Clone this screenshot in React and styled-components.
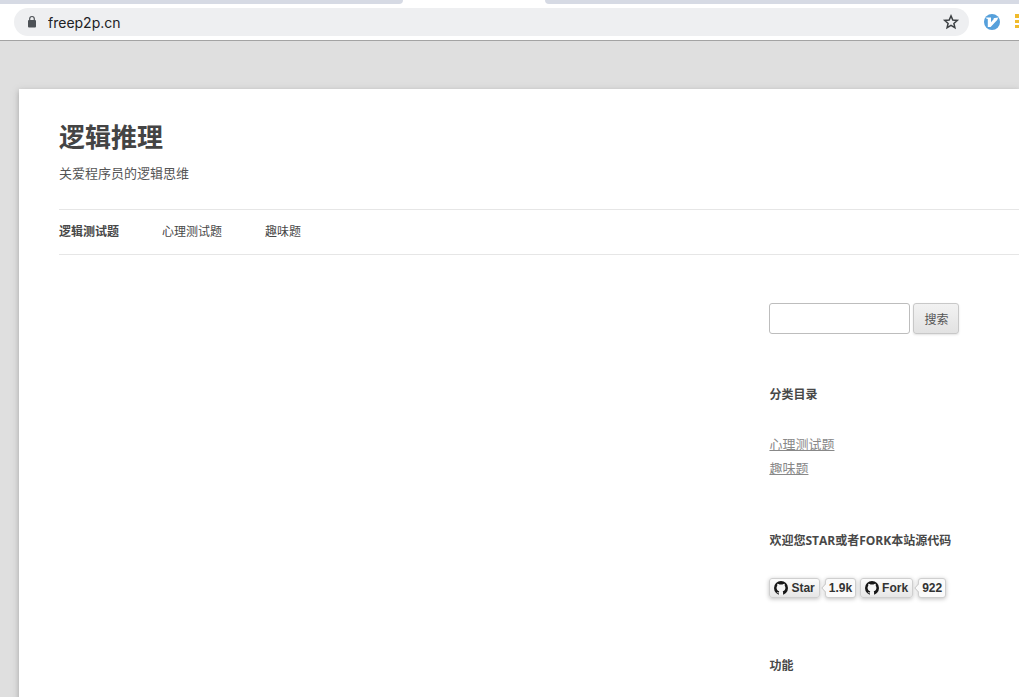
import React, { useState } from "react";
import styled, { createGlobalStyle } from "styled-components";

const menu = [
  { label: "逻辑测试题", href: "#logic", current: true },
  { label: "心理测试题", href: "#psychology" },
  { label: "趣味题", href: "#fun" },
];

const categories = [
  { label: "心理测试题", href: "#psychology" },
  { label: "趣味题", href: "#fun" },
];

const githubButtons = [
  { label: "Star", count: "1.9k" },
  { label: "Fork", count: "922" },
];

function LockIcon() {
  return (
    <svg width="14" height="14" viewBox="0 0 14 14">
      <rect x="3" y="5" width="8" height="7.5" rx="1" fill="#4d5156" />
      <path d="M4.7 5.4V3.8a2.3 2.3 0 0 1 4.6 0v1.6" fill="none" stroke="#4d5156" strokeWidth="1.2" />
    </svg>
  );
}

function GithubMark() {
  return (
    <svg width="14" height="14" viewBox="0 0 14 14">
      <circle cx="7" cy="7" r="7" fill="#161616" />
      <path
        d="M3.4 2.8C4.2 2.7 5 3.2 5.5 3.6 6.5 3.3 7.5 3.3 8.5 3.6 9 3.2 9.8 2.7 10.6 2.8 10.9 3.5 10.9 4.2 10.7 4.7 11.4 5.5 11.6 6.6 11.3 7.8 11 9.2 9.9 10 8.7 10.2 9 10.5 9.1 10.9 9.1 11.4V14H4.9V12.3C3.6 12.5 3.1 11.8 2.7 11.1 3.6 11.2 3.9 11.7 4.9 11.4 4.9 10.9 5 10.5 5.3 10.2 4.1 10 3 9.2 2.7 7.8 2.4 6.6 2.6 5.5 3.3 4.7 3.1 4.2 3.1 3.5 3.4 2.8Z"
        fill="#f4f4f4"
      />
    </svg>
  );
}

function BrowserBar() {
  return (
    <>
      <TabStrip>
        <LeftTabs />
        <RightTabs />
      </TabStrip>
      <Toolbar>
        <AddressBar>
          <LockIcon />
          <AddressInput type="text" aria-label="地址" defaultValue="freep2p.cn" />
          <IconButton type="button" aria-label="收藏">
            <svg width="18" height="18" viewBox="0 0 18 18">
              <path
                d="M9 2.9 10.8 7 15.3 7.4 11.9 10.4 12.9 14.7 9 12.4 5.1 14.7 6.1 10.4 2.7 7.4 7.2 7Z"
                fill="none"
                stroke="#3c4043"
                strokeWidth="1.5"
              />
            </svg>
          </IconButton>
        </AddressBar>
        <IconButton type="button" aria-label="Vimium">
          <svg width="16" height="16" viewBox="0 0 16 16">
            <circle cx="8" cy="8" r="8" fill="#56a0db" />
            <path d="M2.2 3.6H7V8.3L10 4.8 9.2 4.2 14.2 3.4 13.2 6 6.6 13H3.8V5L2.2 4.6Z" fill="#fff" />
          </svg>
        </IconButton>
        <IconButton type="button" aria-label="扩展程序">
          <svg width="16" height="16" viewBox="0 0 16 16">
            <path d="M0 0h16v4H0zM0 6h16v3H0zM0 11h16v3H0z" fill="#f0bb2c" />
          </svg>
        </IconButton>
      </Toolbar>
    </>
  );
}

function GithubButton({ label, count }) {
  return (
    <GithubGroup>
      <GithubLink href="#github">
        <GithubMark />
        {label}
      </GithubLink>
      <CountArrow width="5" height="10" viewBox="0 0 5 10">
        <path d="M5 0.5 0.8 5 5 9.5" fill="#fafafa" stroke="#c4c4c4" />
      </CountArrow>
      <GithubCount href="#github">{count}</GithubCount>
    </GithubGroup>
  );
}

function Sidebar() {
  const [query, setQuery] = useState("");

  return (
    <Aside>
      <Widget>
        <SearchForm onSubmit={(e) => e.preventDefault()}>
          <SearchInput
            type="text"
            aria-label="搜索"
            value={query}
            onChange={(e) => setQuery(e.target.value)}
          />
          <SearchButton type="submit">搜索</SearchButton>
        </SearchForm>
      </Widget>
      <Widget>
        <WidgetTitle>分类目录</WidgetTitle>
        <CategoryList>
          {categories.map((item) => (
            <li key={item.label}>
              <a href={item.href}>{item.label}</a>
            </li>
          ))}
        </CategoryList>
      </Widget>
      <Widget>
        <WidgetTitle>欢迎您STAR或者FORK本站源代码</WidgetTitle>
        <GithubRow>
          {githubButtons.map((item) => (
            <GithubButton key={item.label} {...item} />
          ))}
        </GithubRow>
      </Widget>
      <WidgetTitle>功能</WidgetTitle>
    </Aside>
  );
}

function App() {
  return (
    <Screen>
      <GlobalStyle />
      <BrowserBar />
      <Page>
        <SiteTitle>逻辑推理</SiteTitle>
        <SiteDescription>关爱程序员的逻辑思维</SiteDescription>
        <Nav>
          {menu.map((item) => (
            <NavLink key={item.label} href={item.href} $current={item.current}>
              {item.label}
            </NavLink>
          ))}
        </Nav>
        <Main>
          <Sidebar />
        </Main>
      </Page>
    </Screen>
  );
}

export default App;

const GlobalStyle = createGlobalStyle`
  * {
    box-sizing: border-box;
    margin: 0;
    padding: 0;
  }
  body {
    background: #dfdfdf;
    color: #444;
    font-family: "Open Sans", "Noto Sans CJK SC", sans-serif;
    font-size: 13px;
    line-height: 24px;
  }
  input, button {
    font-family: inherit;
  }
`;

const Screen = styled.div`
  display: flex;
  flex-direction: column;
  min-height: 100vh;
  overflow: hidden;
`;

const TabStrip = styled.div`
  display: flex;
  gap: 142px;
  height: 4px;
  background: #fff;
`;

const LeftTabs = styled.div`
  width: 403px;
  background: #d6dae4;
  border-bottom-right-radius: 8px;
`;

const RightTabs = styled.div`
  flex: 1;
  background: #d6dae4;
  border-bottom-left-radius: 8px;
`;

const Toolbar = styled.div`
  display: flex;
  align-items: center;
  gap: 15px;
  padding: 4px 0 4px 14px;
  margin-right: -12px;
  background: #fff;
  border-bottom: 1px solid #a3a3a3;
`;

const AddressBar = styled.div`
  flex: 1;
  display: flex;
  align-items: center;
  gap: 9px;
  height: 28px;
  padding: 0 9px 0 11px;
  border-radius: 14px;
  background: #eeeff1;
`;

const AddressInput = styled.input`
  flex: 1;
  min-width: 0;
  border: 0;
  outline: 0;
  background: transparent;
  color: #202124;
  font-family: Inter, Roboto, sans-serif;
  font-size: 14px;
`;

const IconButton = styled.button`
  display: flex;
  border: 0;
  background: transparent;
  cursor: pointer;
`;

const Page = styled.div`
  flex: 1;
  margin: 48px 0 0 19px;
  padding: 24px 0 0 40px;
  background: #fff;
  box-shadow: 0 2px 6px rgba(100, 100, 100, 0.5);
`;

const SiteTitle = styled.h1`
  font-size: 26px;
  line-height: 48px;
`;

const SiteDescription = styled.h2`
  color: #555;
  font-size: 13px;
  font-weight: normal;
`;

const Nav = styled.nav`
  display: flex;
  gap: 43px;
  margin-top: 24px;
  border-top: 1px solid #e6e6e6;
  border-bottom: 1px solid #e6e6e6;
`;

const NavLink = styled.a`
  color: #484848;
  font-size: 12px;
  font-weight: ${(props) => (props.$current ? "bold" : "normal")};
  line-height: 44px;
  text-decoration: none;
`;

const Main = styled.main`
  display: flex;
  justify-content: flex-end;
  padding-top: 48px;
`;

const Aside = styled.aside`
  width: 26%;
`;

const Widget = styled.section`
  margin-bottom: 49px;
`;

const WidgetTitle = styled.h3`
  margin-bottom: 25px;
  color: #484848;
  font-size: 12px;
  font-weight: bold;
`;

const SearchForm = styled.form`
  display: flex;
  gap: 3px;
  height: 31px;
`;

const SearchInput = styled.input`
  width: 141px;
  padding: 6px;
  border: 1px solid #bdbdbd;
  border-radius: 3px;
`;

const SearchButton = styled.button`
  padding: 0 10px;
  border: 1px solid #c8c8c8;
  border-radius: 3px;
  background: linear-gradient(#f2f2f2, #e2e2e2);
  box-shadow: 0 1px 2px rgba(64, 64, 64, 0.15);
  color: #555;
  font-size: 12px;
  cursor: pointer;
`;

const CategoryList = styled.ul`
  list-style: none;
  a {
    color: #888;
  }
`;

const GithubRow = styled.div`
  display: flex;
  gap: 4px;
  height: 27px;
`;

const GithubGroup = styled.div`
  display: flex;
  align-items: center;
  height: 20px;
`;

const GithubLink = styled.a`
  display: flex;
  align-items: center;
  gap: 3px;
  height: 20px;
  padding: 0 4px;
  border: 1px solid #cfcfcf;
  border-radius: 3px;
  background: linear-gradient(#fcfcfc, #e6e6e6);
  box-shadow: 0 1px 4px rgba(0, 0, 0, 0.25);
  color: #333;
  font-family: "Liberation Sans", sans-serif;
  font-size: 12px;
  font-weight: bold;
  text-decoration: none;
`;

const GithubCount = styled(GithubLink)`
  padding: 0 3px;
  background: #fafafa;
`;

const CountArrow = styled.svg`
  margin-left: 1px;
  margin-right: -1px;
  z-index: 1;
`;
